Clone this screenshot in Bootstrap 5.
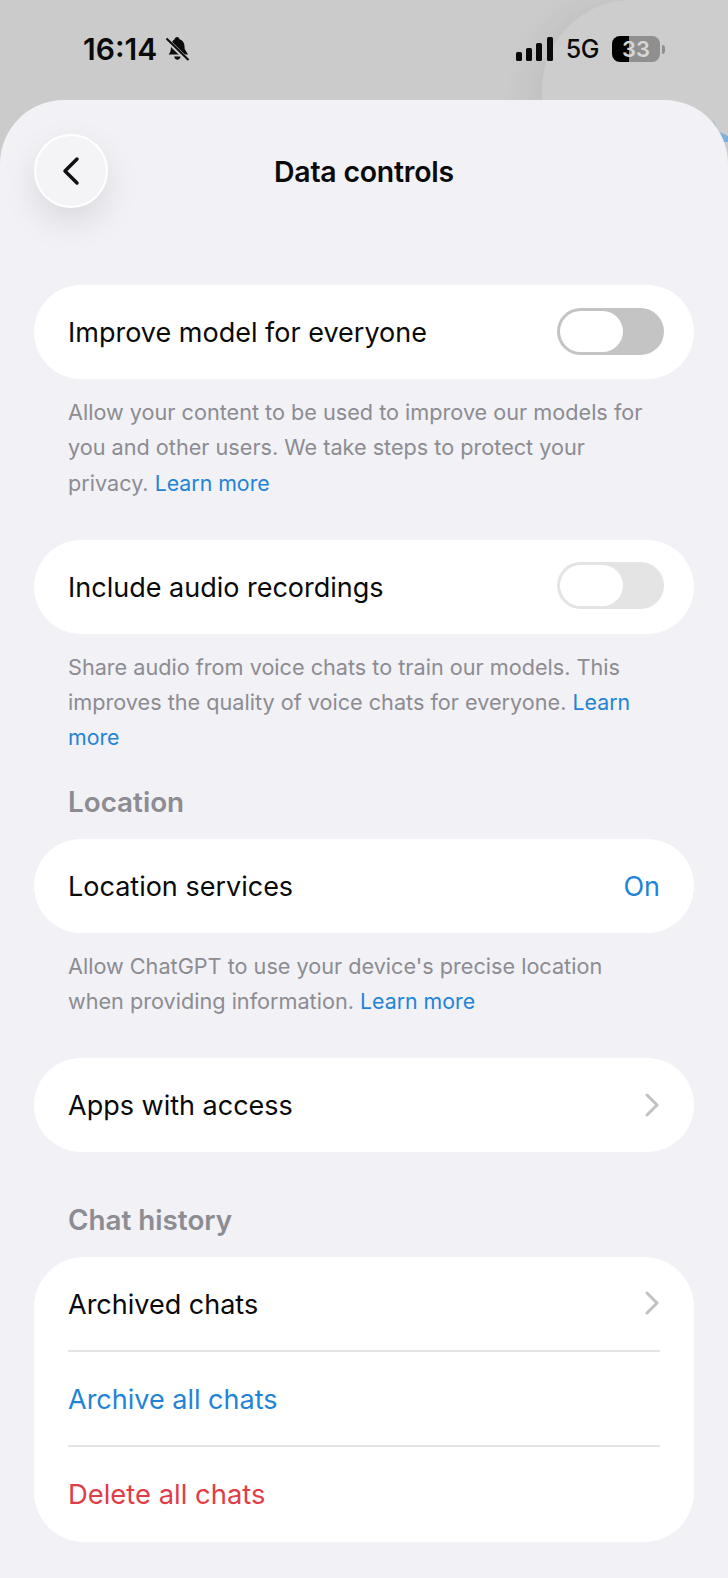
<!DOCTYPE html>
<html lang="en">
  <head>
    <meta charset="UTF-8" />
    <meta name="viewport" content="width=device-width, initial-scale=1.0" />
    <title>Data controls</title>
    <link href="https://cdn.jsdelivr.net/npm/bootstrap@5.3.2/dist/css/bootstrap.min.css" rel="stylesheet" />
    <style>
      body {
        background: #cbcbcb;
        font-family: Inter, "Liberation Sans", sans-serif;
        color: #0a0a0a;
        height: 1578px;
        overflow: hidden;
      }
      .under-sheet {
        position: absolute;
        left: 542px;
        top: 0;
        width: 186px;
        height: 140px;
        border-radius: 90px 0 0 0;
        background: #cdcdcd;
        box-shadow: -14px 0 30px rgba(0, 0, 0, 0.05);
      }
      .under-blip {
        position: absolute;
        left: 712px;
        top: 118px;
        width: 16px;
        height: 24px;
        background: #7fb0d8;
        clip-path: polygon(0 0, 40% 55%, 100% 75%, 100% 100%, 50% 100%);
      }
      .status-row {
        position: relative;
        height: 100px;
        padding: 34px 63px 0 83px;
      }
      .status-time {
        font-size: 30px;
        font-weight: 600;
        line-height: 30px;
      }
      .status-net {
        font-size: 25px;
        line-height: 30px;
        font-weight: 500;
        letter-spacing: -0.5px;
        margin: 0 13px;
      }
      .battery-box {
        position: relative;
        width: 48px;
        height: 26px;
        border-radius: 8px;
        overflow: hidden;
        background: linear-gradient(90deg, #000 0 17px, #8f8f8f 17px);
        color: #d6d6d6;
        font-size: 22px;
        font-weight: 600;
        line-height: 26px;
        text-align: center;
      }
      .battery-tip {
        width: 3px;
        height: 9px;
        border-radius: 0 3px 3px 0;
        background: #8f8f8f;
        margin-left: 2px;
      }
      .sheet {
        position: relative;
        height: 1478px;
        background: #f1f1f6;
        border-radius: 64px 64px 0 0;
        padding: 34px 34px 0;
      }
      .sheet-head {
        display: grid;
        grid-template-columns: 74px 1fr 74px;
        align-items: center;
        height: 74px;
        margin-bottom: 77px;
      }
      .back-btn {
        width: 74px;
        height: 74px;
        border-radius: 50%;
        background: #f4f4f6;
        border: 2px solid #fff;
        box-shadow: 0 14px 34px rgba(0, 0, 0, 0.1);
      }
      .head-title {
        font-size: 28.4px;
        font-weight: 600;
        margin: 0;
        padding-top: 2px;
        letter-spacing: -0.2px;
        text-align: center;
      }
      .pill-card {
        background: #fff;
        border-radius: 47px;
        padding: 2px 34px 0;
        font-size: 27px;
        height: 94px;
      }
      .pill-card.stacked {
        height: 285px;
        border-radius: 50px;
        padding-top: 0;
      }
      .pill-row {
        height: 95px;
        padding-top: 2px;
      }
      .pill-row:first-child {
        height: 93px;
      }
      .pill-row + .pill-row {
        border-top: 2px solid #e4e4e6;
      }
      .ink-blue {
        color: #1f84d6;
      }
      .ink-red {
        color: #df3d47;
        font-size: 27.4px;
      }
      .switch-track {
        width: 107px;
        height: 47px;
        border-radius: 24px;
        padding: 3px;
        background: #c4c4c4;
        margin: -4px -4px 0 0;
      }
      .switch-track.faint {
        background: #e4e4e4;
      }
      .switch-knob {
        width: 63px;
        height: 41px;
        border-radius: 21px;
        background: #fff;
      }
      .row-chevron {
        margin-top: -3px;
      }
      .note-text {
        font-size: 21.65px;
        line-height: 35.3px;
        color: #8c8c92;
        padding: 16px 34px 0;
        margin: 0 0 39px;
      }
      .note-text a {
        color: #1f84d6;
        font-size: 21.3px;
        text-decoration: none;
      }
      .note-text.tight {
        margin-bottom: 26px;
      }
      .group-label {
        font-size: 27.8px;
        font-weight: 600;
        line-height: 40px;
        color: #8c8c92;
        padding: 0 34px;
        margin: 0 0 17px;
      }
      .group-label.spaced {
        margin-top: 48px;
      }
    </style>
  </head>
  <body>
    <div class="under-sheet"></div>
    <div class="under-blip"></div>

    <div class="status-row d-flex justify-content-between align-items-start">
      <div class="d-flex align-items-center gap-2">
        <span class="status-time">16:14</span>
        <svg width="25" height="26" viewBox="0 0 25 26">
          <path d="M12 1c1.400 0 2.300 1 2.500 2.200 3.200.9 4.800 3.400 5 6.800l.2 3 3.300 5.500H3.500c1.700-1.800 2.300-3.500 2.400-6.500l.1-3c.2-2.400 2-4.800 3.600-5.800C9.900 2 10.700 1 12 1zM9.200 20.500h6.400c-.2 1.900-1.500 3.300-3.200 3.300s-3-1.400-3.200-3.300z" fill="#0a0a0a"/>
          <path d="M1.500 3.500 23 24.500" stroke="#cbcbcb" stroke-width="4.500"/>
          <path d="M1.500 2.500 23.500 24" stroke="#0a0a0a" stroke-width="2"/>
        </svg>
      </div>
      <div class="d-flex align-items-center">
        <svg width="37" height="24" viewBox="0 0 37 24">
          <rect x="0" y="15" width="6" height="9" rx="1.500" fill="#0a0a0a"/>
          <rect x="10" y="11" width="6" height="13" rx="1.500" fill="#0a0a0a"/>
          <rect x="20" y="6" width="6" height="18" rx="1.500" fill="#0a0a0a"/>
          <rect x="31" y="0" width="6" height="24" rx="1.500" fill="#0a0a0a"/>
        </svg>
        <span class="status-net">5G</span>
        <div class="battery-box">33</div>
        <div class="battery-tip"></div>
      </div>
    </div>

    <main class="sheet">
      <header class="sheet-head">
        <button class="back-btn d-flex align-items-center justify-content-center p-0" aria-label="Back">
          <svg width="18" height="30" viewBox="0 0 18 30">
            <path d="M15 3 3 15l12 12" fill="none" stroke="#111" stroke-width="3.500" stroke-linecap="round" stroke-linejoin="round"/>
          </svg>
        </button>
        <h1 class="head-title">Data controls</h1>
      </header>

      <div class="pill-card d-flex align-items-center justify-content-between">
        <span>Improve model for everyone</span>
        <div class="switch-track"><div class="switch-knob"></div></div>
      </div>
      <p class="note-text">Allow your content to be used to improve our models for you and other users. We take steps to protect your privacy. <a href="#">Learn more</a></p>

      <div class="pill-card d-flex align-items-center justify-content-between">
        <span>Include audio recordings</span>
        <div class="switch-track faint"><div class="switch-knob"></div></div>
      </div>
      <p class="note-text tight">Share audio from voice chats to train our models. This improves the quality of voice chats for everyone. <a href="#">Learn more</a></p>

      <h2 class="group-label">Location</h2>
      <div class="pill-card d-flex align-items-center justify-content-between">
        <span>Location services</span>
        <span class="ink-blue">On</span>
      </div>
      <p class="note-text">Allow ChatGPT to use your device's precise location when providing information. <a href="#">Learn more</a></p>

      <div class="pill-card d-flex align-items-center justify-content-between">
        <span>Apps with access</span>
        <svg class="row-chevron" width="16" height="24" viewBox="0 0 16 24">
          <path d="M3 2l10 10L3 22" fill="none" stroke="#c2c2c6" stroke-width="3" stroke-linecap="round" stroke-linejoin="round"/>
        </svg>
      </div>

      <h2 class="group-label spaced">Chat history</h2>
      <div class="pill-card stacked d-flex flex-column">
        <div class="pill-row d-flex align-items-center justify-content-between">
          <span>Archived chats</span>
          <svg class="row-chevron" width="16" height="24" viewBox="0 0 16 24">
            <path d="M3 2l10 10L3 22" fill="none" stroke="#c2c2c6" stroke-width="3" stroke-linecap="round" stroke-linejoin="round"/>
          </svg>
        </div>
        <div class="pill-row d-flex align-items-center ink-blue">Archive all chats</div>
        <div class="pill-row d-flex align-items-center ink-red">Delete all chats</div>
      </div>
    </main>

    <script src="https://cdn.jsdelivr.net/npm/bootstrap@5.3.2/dist/js/bootstrap.bundle.min.js"></script>
  </body>
</html>
